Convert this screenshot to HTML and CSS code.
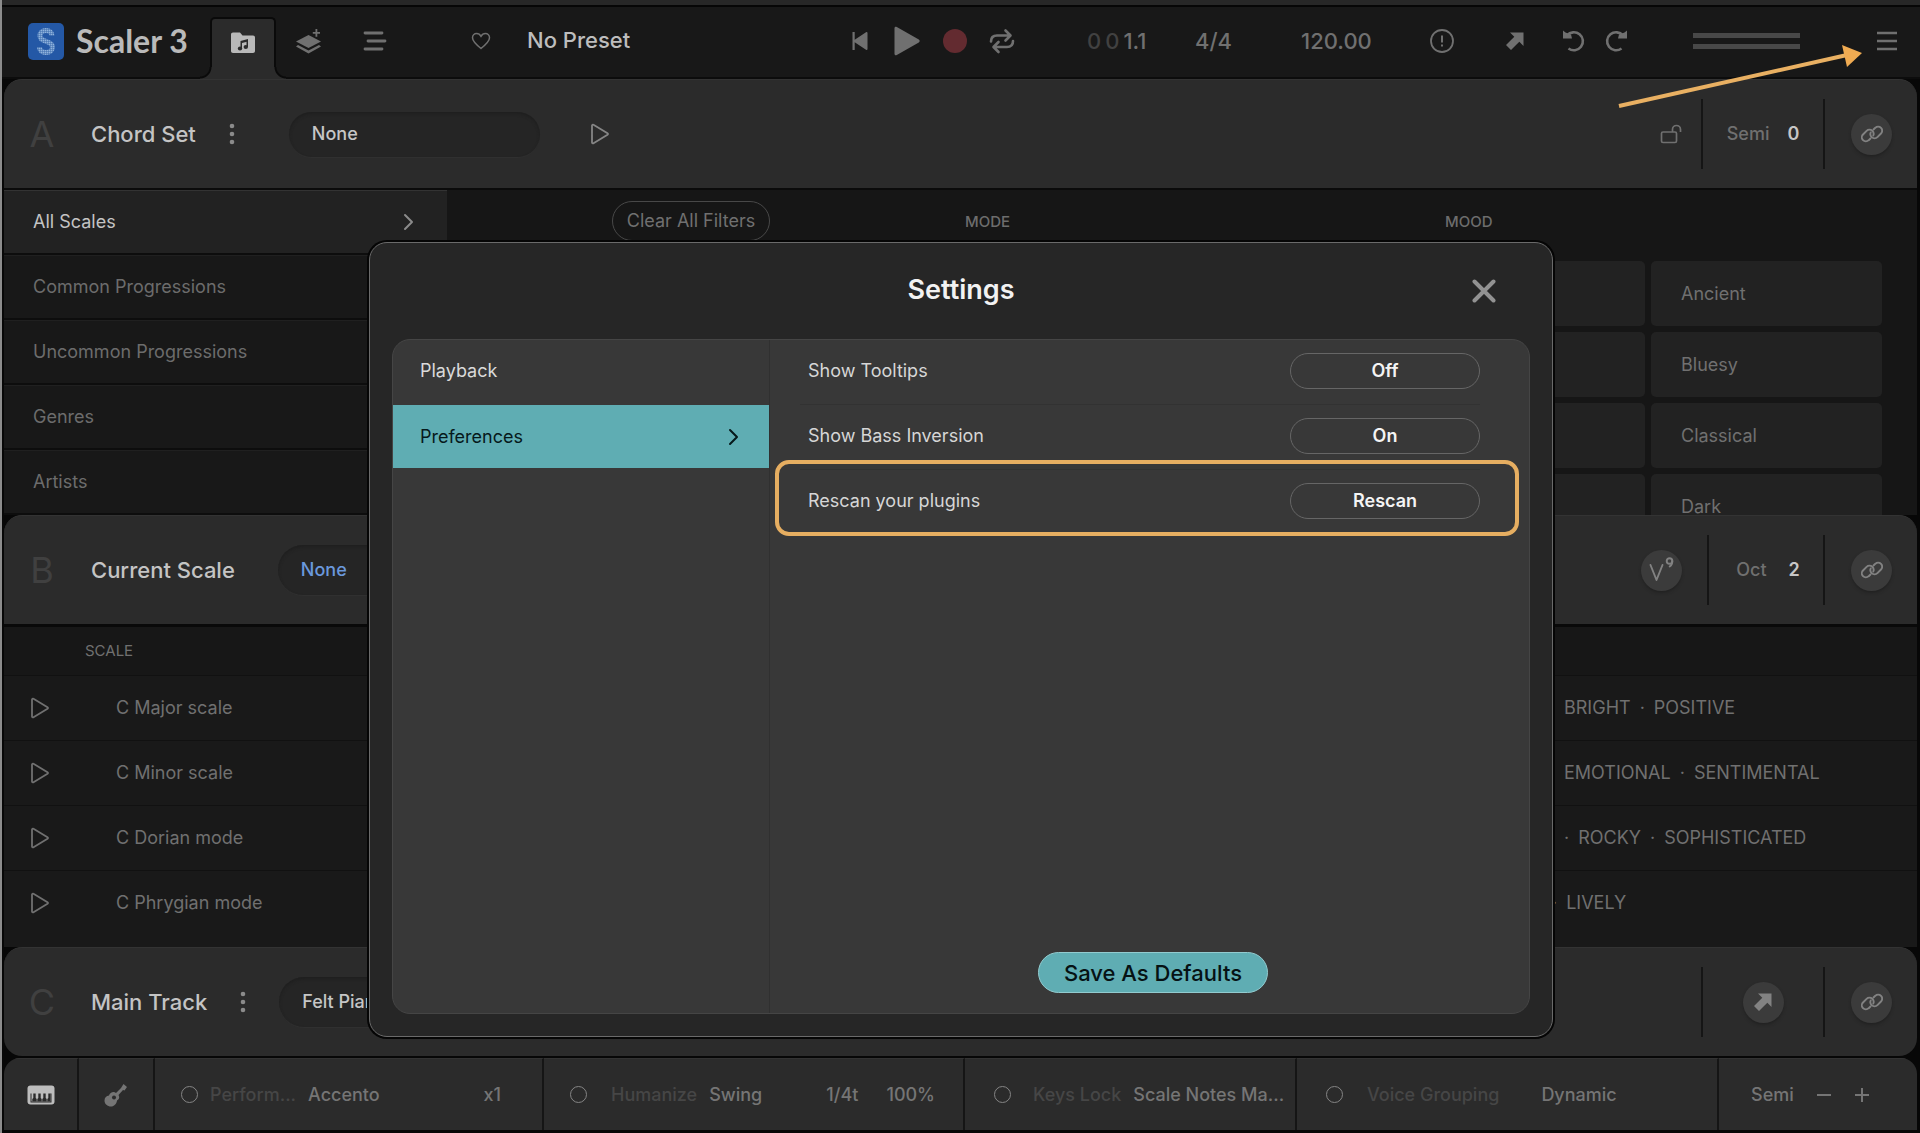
FILE: index.html
```html
<!DOCTYPE html>
<html lang="en">
<head>
<meta charset="utf-8">
<title>Scaler 3 – Settings</title>
<link rel="stylesheet" href="styles.css">
</head>
<body>
<svg class="sprite" aria-hidden="true">
  <symbol id="play" viewBox="0 0 20 22"><path d="M2 2.6v16.8c0 .9.8 1.3 1.5.8l14-8.4c.7-.5.7-1.1 0-1.6l-14-8.4C2.800 1.300 2 1.700 2 2.600z" fill="none" stroke="currentColor" stroke-width="1.8"/></symbol>
  <symbol id="link" viewBox="0 0 22 18"><g fill="none" stroke="currentColor" stroke-width="1.900" stroke-linecap="round"><path d="M9.500 13.500l-1.800 1.700a4 4 0 0 1-5.700-5.700l3.600-3.700a4 4 0 0 1 5.700 0 4.200 4.200 0 0 1 1 4.700"/><path d="M12.500 4.500l1.800-1.700a4 4 0 0 1 5.700 5.700l-3.600 3.700a4 4 0 0 1-5.700 0 4.200 4.200 0 0 1-1-4.700"/></g></symbol>
  <symbol id="arrow" viewBox="0 0 20 20"><path d="M5 1.500h13.500v13.500l-4.200-4.300L6 19 1 14l8.300-8.300z" fill="currentColor"/></symbol>
  <symbol id="chevron" viewBox="0 0 12 18"><path d="M2 2l7 7-7 7" fill="none" stroke="currentColor" stroke-width="2" stroke-linecap="round" stroke-linejoin="round"/></symbol>
  <symbol id="dots" viewBox="0 0 6 22"><g fill="currentColor"><circle cx="3" cy="3" r="2.300"/><circle cx="3" cy="11" r="2.300"/><circle cx="3" cy="19" r="2.300"/></g></symbol>
</svg>

<div class="app">
  <header class="topbar">
    <div class="brand">
      <svg class="logo" viewBox="0 0 36 37"><defs><pattern id="led" width="2" height="2" patternUnits="userSpaceOnUse"><rect width="2" height="2" fill="#8fb2dd"/><path d="M0 0h2M0 0v2" stroke="#3c6cae" stroke-width="1"/></pattern></defs><rect width="36" height="37" rx="5" fill="#2458a6"/><path d="M24 12.500c0-3-2.500-5-6-5s-6 2-6 5.300c0 3 2.500 4.500 6 5.500s6.500 2.500 6.500 6c0 3.200-2.600 5.200-6.500 5.200s-6.500-2-6.500-5.200" fill="none" stroke="url(#led)" stroke-width="5"/></svg>
      <span class="wordmark">Scaler 3</span>
    </div>
    <nav class="tabs">
      <button class="tab tab-active" aria-label="Browse"><svg width="26" height="22" viewBox="0 0 26 22"><path d="M1 2.500C1 1.300 1.800.5 3 .5h7l2.500 3H23c1.200 0 2 .8 2 2V19c0 1.200-.8 2-2 2H3c-1.200 0-2-.8-2-2z" fill="currentColor"/><g fill="#2b2b2b"><path d="M10.500 9l7.500-2v2.400l-6 1.600v5h-1.500z"/><path d="M16.500 8H18v7h-1.500z"/><ellipse cx="10" cy="16.500" rx="2.200" ry="2"/><ellipse cx="15.800" cy="15" rx="2.200" ry="2"/></g></svg></button>
      <button class="tab" aria-label="Layers"><svg width="26" height="26" viewBox="0 0 26 26"><g fill="currentColor"><path d="M12.500 7L25 13.500 12.500 20 0 13.500z"/><path d="M2 17l10.500 5.500L23 17l2 1.500L12.500 25.500 0 18.500z"/><path d="M19.500 1h1.800v3H24v1.800h-2.700v3h-1.800v-3h-2.700V4h2.700z"/></g></svg></button>
      <button class="tab" aria-label="Arrange"><svg width="26" height="22" viewBox="0 0 26 22"><path d="M3 3h17M6 11h17M3 19h17" stroke="currentColor" stroke-width="2.800" stroke-linecap="round"/></svg></button>
    </nav>
    <button class="heart" aria-label="Favourite"><svg width="20" height="18" viewBox="0 0 20 18"><path d="M10 16.500C5 12.500 1.500 9.500 1.500 5.800 1.500 3.400 3.300 1.500 5.600 1.500c1.800 0 3.400 1 4.400 2.800 1-1.800 2.600-2.800 4.400-2.800 2.300 0 4.100 1.900 4.100 4.300 0 3.700-3.500 6.700-8.500 10.700z" fill="none" stroke="currentColor" stroke-width="1.500"/></svg></button>
    <button class="preset">No Preset</button>
    <div class="transport">
      <button aria-label="Rewind"><svg width="18" height="20" viewBox="0 0 18 20"><path d="M1.500 1h2.200v7.800L15 1.200c.8-.5 1.500-.1 1.500.8v16c0 .9-.7 1.300-1.500.8L3.700 11.200V19H1.500z" fill="currentColor"/></svg></button>
      <button aria-label="Play"><svg width="28" height="30" viewBox="0 0 28 30"><path d="M1.500 2.200C1.500.8 2.600.3 3.800 1l22 12.600c1.200.8 1.200 2 0 2.800l-22 12.600c-1.200.7-2.300.2-2.300-1.200z" fill="currentColor"/></svg></button>
      <button aria-label="Record"><svg width="24" height="24" viewBox="0 0 24 24"><circle cx="12" cy="12" r="12" fill="#632b30"/></svg></button>
      <button aria-label="Loop"><svg width="26" height="26" viewBox="0 0 26 26"><g fill="none" stroke="currentColor" stroke-width="2.600" stroke-linecap="round" stroke-linejoin="round"><path d="M2 13.500c0-4 2.500-6 6-6h13M16.500 2.500l5 5-5 5"/><path d="M24 13c0 4-2.500 6-6 6H5M9.500 14l-5 5 5 5"/></g></svg></button>
    </div>
    <div class="readout position"><span>0</span><span>0</span>1.1</div>
    <div class="readout meter">4/4</div>
    <div class="readout tempo">120.00</div>
    <button class="alert" aria-label="Panic"><svg width="24" height="24" viewBox="0 0 24 24"><circle cx="12" cy="12" r="11" fill="none" stroke="currentColor" stroke-width="1.800"/><path d="M12 6.500v7M12 15.500v2" stroke="currentColor" stroke-width="2"/></svg></button>
    <button class="export" aria-label="Export"><svg width="20" height="20"><use href="#arrow"/></svg></button>
    <div class="history">
      <button aria-label="Undo"><svg width="24" height="24" viewBox="0 0 24 24"><path d="M5 6.500a9 9 0 1 1 1.500 13" fill="none" stroke="currentColor" stroke-width="2.600"/><path d="M1 1.500l2.500 2L9 5.500l1 4H1z" fill="currentColor"/></svg></button>
      <button aria-label="Redo"><svg width="24" height="24" viewBox="0 0 24 24"><path d="M19 6.500a9 9 0 1 0-1.500 13" fill="none" stroke="currentColor" stroke-width="2.600"/><path d="M23 1.500l-2.500 2L15 5.500l-1 4h9z" fill="currentColor"/></svg></button>
    </div>
    <div class="levels"><i></i><i></i></div>
    <button class="menu" aria-label="Menu"><svg width="22" height="20" viewBox="0 0 22 20"><path d="M1 2h20M1 10h20M1 18h20" stroke="currentColor" stroke-width="2.600"/></svg></button>
  </header>

  <section class="panel">
    <span class="letter">A</span>
    <h2>Chord Set</h2>
    <button class="more" aria-label="More"><svg width="6" height="22"><use href="#dots"/></svg></button>
    <button class="pill chord-pill">None</button>
    <button class="audition" aria-label="Audition"><svg width="20" height="22"><use href="#play"/></svg></button>
    <div class="panel-end">
      <button class="lock" aria-label="Lock"><svg width="22" height="20" viewBox="0 0 22 20"><g fill="none" stroke="currentColor" stroke-width="1.700"><rect x="1.500" y="8" width="15" height="10.500" rx="1.500"/><path d="M12.500 8V5.500a4 4 0 0 1 8 0v2.500"/></g></svg></button>
      <div class="stepper">Semi<b>0</b></div>
      <button class="round" aria-label="Link"><svg width="22" height="18"><use href="#link"/></svg></button>
    </div>
  </section>

  <section class="browser">
    <nav class="categories">
      <a class="category current" href="#">All Scales<svg width="12" height="18"><use href="#chevron"/></svg></a>
      <a class="category" href="#">Common Progressions</a>
      <a class="category" href="#">Uncommon Progressions</a>
      <a class="category" href="#">Genres</a>
      <a class="category" href="#">Artists</a>
    </nav>
    <div class="filters">
      <button class="clear">Clear All Filters</button>
      <h3 class="mode-title">MODE</h3>
      <div class="mood">
        <h3>MOOD</h3>
        <div class="tiles">
          <button></button><button>Ancient</button>
          <button></button><button>Bluesy</button>
          <button></button><button>Classical</button>
          <button></button><button>Dark</button>
        </div>
      </div>
    </div>
  </section>

  <section class="panel">
    <span class="letter">B</span>
    <h2>Current Scale</h2>
    <button class="pill scale-pill">None</button>
    <div class="panel-end">
      <button class="round voicing" aria-label="Voicing"><svg width="26" height="30" viewBox="0 0 26 30"><g fill="none" stroke="currentColor" stroke-width="1.900" stroke-linecap="round" stroke-linejoin="round"><path d="M1.500 10l6 15 6-15"/><circle cx="20.500" cy="6" r="2.800"/><path d="M23.300 6c0 3-1 4.500-2.600 5.500"/></g></svg></button>
      <div class="stepper stepper-oct">Oct<b>2</b></div>
      <button class="round" aria-label="Link"><svg width="22" height="18"><use href="#link"/></svg></button>
    </div>
  </section>

  <section class="scales">
    <table>
      <thead><tr><th class="audition-cell"></th><th class="scale-head">SCALE</th><th></th></tr></thead>
      <tbody>
        <tr><td class="audition-cell"><button aria-label="Play C Major scale"><svg width="20" height="22"><use href="#play"/></svg></button></td><td class="name">C Major scale</td><td class="tags"><span>BRIGHT</span><span>·</span><span>POSITIVE</span></td></tr>
        <tr><td class="audition-cell"><button aria-label="Play C Minor scale"><svg width="20" height="22"><use href="#play"/></svg></button></td><td class="name">C Minor scale</td><td class="tags"><span>EMOTIONAL</span><span>·</span><span>SENTIMENTAL</span></td></tr>
        <tr><td class="audition-cell"><button aria-label="Play C Dorian mode"><svg width="20" height="22"><use href="#play"/></svg></button></td><td class="name">C Dorian mode</td><td class="tags"><span>·</span><span>ROCKY</span><span>·</span><span>SOPHISTICATED</span></td></tr>
        <tr><td class="audition-cell"><button aria-label="Play C Phrygian mode"><svg width="20" height="22"><use href="#play"/></svg></button></td><td class="name">C Phrygian mode</td><td class="tags"><span class="hanging">·</span><span>LIVELY</span></td></tr>
      </tbody>
    </table>
  </section>

  <section class="panel panel-c">
    <span class="letter">C</span>
    <h2>Main Track</h2>
    <button class="more" aria-label="More"><svg width="6" height="22"><use href="#dots"/></svg></button>
    <button class="pill track-pill">Felt Piano</button>
    <div class="panel-end">
      <div class="stepper"><button class="round" aria-label="Export"><svg width="20" height="20"><use href="#arrow"/></svg></button></div>
      <button class="round" aria-label="Link"><svg width="22" height="18"><use href="#link"/></svg></button>
    </div>
  </section>

  <footer class="footer">
    <button class="cell cell-icon bright" aria-label="Keyboard"><svg width="28" height="20" viewBox="0 0 28 20"><rect x=".5" y=".5" width="27" height="19" rx="3" fill="currentColor"/><path d="M3.500 8.500h1v8h19v-8h1v9h-21z" fill="#2b2b2b"/><path d="M6.300 8.500h2.400v4.500l1 1v2.500H5.300V14l1-1zM11.300 8.500h2.400v4.500l1 1v2.500h-4.400V14l1-1zM16.300 8.500h2.400v4.500l1 1v2.500h-4.400V14l1-1zM21.300 8.500h2.200v8h-3.200V14l1-1z" fill="#2b2b2b"/></svg></button>
    <button class="cell cell-icon" aria-label="Guitar"><svg width="24" height="24" viewBox="0 0 24 24"><path d="M19.500 1l3.500 3-2.500 3.500-1.500-.5-4.500 5c1.500 2.500.5 4.500-1.500 5.500-.5 3.500-3 6-6 6C3.500 23.500.5 21 .5 17.500c0-3 2-4.500 4.500-5 1-3 4.500-4.500 7-2.500l5-5z" fill="currentColor"/><circle cx="10" cy="14.500" r="2" fill="#2b2b2b"/></svg></button>
    <div class="cell"><i class="led"></i><span class="dim">Perform...</span><span>Accento</span><span class="end">x1</span></div>
    <div class="cell humanize"><i class="led"></i><span class="dim">Humanize</span><span>Swing</span><span class="end">1/4t</span><span class="percent">100%</span></div>
    <div class="cell keys"><i class="led"></i><span class="dim">Keys Lock</span><span>Scale Notes Ma...</span></div>
    <div class="cell voice"><i class="led"></i><span class="dim">Voice Grouping</span><span>Dynamic</span></div>
    <div class="cell semi"><span>Semi</span><button aria-label="Decrease"><svg width="16" height="16" viewBox="0 0 16 16"><path d="M1 8h14" stroke="currentColor" stroke-width="2"/></svg></button><button aria-label="Increase"><svg width="16" height="16" viewBox="0 0 16 16"><path d="M1 8h14M8 1v14" stroke="currentColor" stroke-width="2"/></svg></button></div>
  </footer>
</div>

<div class="overlay">
  <div class="dialog" role="dialog" aria-labelledby="dialog-title">
    <div class="dialog-head">
      <h1 id="dialog-title">Settings</h1>
      <button class="close" aria-label="Close"><svg width="24" height="24" viewBox="0 0 24 24"><path d="M2.500 2.500l19 19M21.500 2.500l-19 19" stroke="currentColor" stroke-width="4" stroke-linecap="round"/></svg></button>
    </div>
    <div class="dialog-body">
      <nav class="sections">
        <a href="#">Playback</a>
        <a class="selected" href="#">Preferences<svg width="12" height="18"><use href="#chevron"/></svg></a>
      </nav>
      <div class="options">
        <div class="option"><label for="tooltips">Show Tooltips</label><button id="tooltips">Off</button></div>
        <div class="option"><label for="inversion">Show Bass Inversion</label><button id="inversion">On</button></div>
        <div class="option highlighted"><label for="rescan">Rescan your plugins</label><button id="rescan">Rescan</button></div>
        <button class="save">Save As Defaults</button>
      </div>
    </div>
  </div>
</div>
<svg class="pointer" width="250" height="70" viewBox="0 0 250 70"><path d="M4 62L232 11" stroke="#e9b062" stroke-width="4"/><path d="M227 1l20 8-15 14z" fill="#f0ab52"/></svg>
</body>
</html>
```
FILE: styles.css
```css
* { box-sizing: border-box; }
body { margin: 0; background: #070707; font: 400 18px/24px Inter, "Liberation Sans", sans-serif; color: #707070; }
button { margin: 0; padding: 0; border: 0; background: none; font: inherit; color: inherit; }
a { color: inherit; text-decoration: none; }
h1, h2, h3 { margin: 0; }
svg { display: block; flex: none; }
.sprite { position: absolute; width: 0; height: 0; }

.app { min-height: 100vh; display: flex; flex-direction: column; border-left: 2px solid #8c8c8c; padding: 0 3px 3px 2px; background: #070707; }

/* Top bar */
.topbar { display: flex; align-items: center; height: 79px; padding: 0 22px 0 26px; margin: 0 -3px 0 -2px; border-top: 5px solid #272727; border-bottom: 2px solid #0c0c0c; background: #181818; box-shadow: inset 0 2px #060606; }
.brand { display: flex; align-items: center; gap: 12px; width: 182px; }
.logo { width: 36px; height: 37px; }
.wordmark { font: 700 32px/36px Lato, sans-serif; color: #bababa; white-space: nowrap; }
.tabs { display: flex; align-self: stretch; }
.tab { width: 66px; display: flex; align-items: center; justify-content: center; }
.tab-active { position: relative; margin: 12px 0 -2px; height: 62px; padding-bottom: 12px; border: 2px solid #0a0a0a; border-bottom: 0; border-radius: 5px 5px 0 0; background: #2b2b2b; color: #b9b9b9; }
.tab-active::before, .tab-active::after { content: ""; position: absolute; bottom: 0; width: 12px; height: 12px; }
.tab-active::before { right: 100%; background: radial-gradient(circle at 0 0, transparent 9px, #0a0a0a 10px 11px, #2b2b2b 12px); }
.tab-active::after { left: 100%; background: radial-gradient(circle at 100% 0, transparent 9px, #0a0a0a 10px 11px, #2b2b2b 12px); }
.heart { margin: 0 36px 0 63px; }
.preset { font-size: 22px; font-weight: 500; padding-bottom: 2px; color: #bdbdbd; }
.transport { display: flex; align-items: center; gap: 22px; margin-left: auto; }
.transport button:first-child { margin-right: 2px; }
.readout { font-size: 22px; font-weight: 500; }
.readout span { color: #414141; }
.position { display: flex; gap: 4px; width: 66px; margin-left: 72px; }
.meter { width: 38px; margin-left: 42px; }
.tempo { width: 72px; margin-left: 68px; }
.alert { margin-left: 57px; }
.export { margin-left: 51px; }
.history { display: flex; gap: 18px; margin-left: 37px; }
.levels { display: grid; gap: 6px; width: 107px; margin: 0 76px 0 65px; }
.levels i { height: 5px; background: #484848; }

/* Lettered panels */
.panel { display: flex; align-items: center; height: 109px; padding: 0 25px 0 24px; border-top: 1px solid #333; border-radius: 18px 18px 0 0; background: #2b2b2b; }
.panel-c { border-radius: 18px; }
.letter { width: 28px; margin-right: 35px; font-size: 36px; font-weight: 400; line-height: 40px; text-align: center; color: #404040; }
.panel h2 { font-size: 22px; font-weight: 500; line-height: 28px; color: #c4c4c4; }
.more { margin-left: 33px; color: #8b8b8b; }
.pill { text-align: left; font-weight: 500; color: #c6c6c6; background: #252525; border-radius: 25px; height: 50px; padding-left: 23px; box-shadow: inset 0 2px 3px #1f1f1f, 0 1px #303030; }
.chord-pill { width: 251px; height: 45px; margin-left: 54px; }
.scale-pill { width: 300px; margin-left: 43px; color: #6a98dc; }
.track-pill { width: 300px; margin-left: 33px; }
.audition { margin-left: 50px; color: #858585; }
.panel-end { display: flex; align-items: center; margin-left: auto; }
.lock { margin-right: 19px; }
.stepper { display: flex; align-items: center; justify-content: center; gap: 18px; width: 124px; height: 70px; margin-right: 26px; border: solid #151515; border-width: 0 2px; font-weight: 500; }
.stepper b { font-weight: 600; color: #c6c6c6; }
.stepper-oct { width: 118px; gap: 22px; padding-left: 4px; }
.round { display: flex; align-items: center; justify-content: center; width: 41px; height: 41px; border-radius: 50%; background: #3b3b3b; box-shadow: 0 2px 3px #222; color: #828282; }
.voicing { margin-right: 25px; }

/* Scale browser */
.browser { display: flex; height: 327px; border-top: 2px solid #0b0b0b; background: #161616; overflow: hidden; }
.categories { display: flex; flex-direction: column; width: 443px; background: #181818; }
.category { flex: 1; display: flex; align-items: center; justify-content: space-between; padding: 0 32px 0 29px; border-bottom: 2px solid #0d0d0d; box-shadow: inset 0 1px #202020; color: #6c6c6c; }
.current { background: #222; color: #c4c4c4; box-shadow: inset 0 1px #333; }
.current svg { color: #8b8b8b; }
.filters { flex: 1; display: flex; align-items: flex-start; padding-right: 35px; }
.clear { margin: 11px 195px 0 165px; width: 158px; height: 40px; border: 1px solid #484848; border-radius: 20px; white-space: nowrap; }
.filters h3 { font-size: 15px; font-weight: 500; line-height: 24px; color: #6d6d6d; padding-top: 20px; }
.mood { width: 468px; margin-left: auto; }
.mood h3 { padding-left: 31px; }
.tiles { display: grid; grid-template-columns: 1fr 1fr; gap: 6px; margin-top: 27px; }
.tiles button { height: 65px; padding-left: 30px; border-radius: 5px; background: #222; text-align: left; }

/* Scale table */
.scales { flex: 1; border-top: 3px solid #090909; background: #191919; padding-bottom: 9px; }
table { width: 100%; border-collapse: collapse; }
th { height: 48px; padding: 0; text-align: left; font-size: 15px; font-weight: 400; background: #171717; }
td { height: 65px; padding: 0; }
tr { border-bottom: 1px solid #111; }
tbody tr:last-child { border-bottom: 0; }
.audition-cell { width: 81px; padding-left: 26px; }
.audition-cell button { display: block; }
.name { padding-left: 31px; }
.tags { width: 353px; white-space: nowrap; }
.tags span { margin-right: 9px; }
.tags .hanging { margin-left: -12px; }

/* Footer */
.footer { display: grid; grid-template-columns: 75px 76px 389fr 421fr 332fr 422fr 198px; height: 72px; margin-top: 2px; border-radius: 16px 16px 0 0; overflow: hidden; background: #2b2b2b; }
.cell { display: flex; align-items: center; padding: 0 41px 0 26px; border-top: 1px solid #333; border-right: 2px solid #151515; font-weight: 500; color: #757575; white-space: nowrap; }
.cell:last-child { border-right: 0; }
.cell-icon { justify-content: center; padding: 0; }
.bright { color: #bdbdbd; }
.led { flex: none; width: 17px; height: 17px; border: 1px solid #858585; border-radius: 50%; margin-right: 12px; }
.dim { color: #464646; margin-right: 12px; }
.end { margin-left: auto; }
.humanize { padding-right: 28px; }
.percent { margin-left: 28px; }
.humanize .led, .voice .led { margin-right: 24px; }
.keys .led { margin-right: 22px; }
.keys, .voice { padding-left: 29px; padding-right: 0; }
.voice .dim { margin-right: 42px; }
.semi { padding: 0 0 0 32px; gap: 22px; }

/* Settings dialog */
.overlay { position: absolute; inset: 242px 0 96px 2px; display: flex; justify-content: center; }
.dialog { display: flex; flex-direction: column; width: 1184px; max-width: 96%; padding: 0 22px 22px; border: 1px solid #6a6a6a; border-radius: 18px; background: #262626; box-shadow: 0 0 0 2px #050505; }
.dialog-head { position: relative; display: flex; align-items: center; justify-content: center; height: 96px; }
.dialog-head h1 { font-size: 27px; font-weight: 600; line-height: 36px; padding-bottom: 3px; color: #f2f2f2; }
.close { position: absolute; right: 34px; color: #929292; }
.dialog-body { flex: 1; display: flex; border: 1px solid #454545; border-radius: 18px; background: #383838; overflow: hidden; }
.sections { width: 377px; border-right: 1px solid #303030; color: #dadada; }
.sections a { display: flex; align-items: center; justify-content: space-between; height: 65px; padding: 0 29px 3px 27px; }
.sections .selected { height: 63px; padding-bottom: 0; background: #5fadb3; color: #06191b; }
.options { flex: 1; display: flex; flex-direction: column; align-items: center; padding: 0 10px 20px 17px; }
.option { align-self: stretch; position: relative; display: flex; align-items: center; justify-content: space-between; height: 65px; margin: 0 39px 0 13px; padding-left: 8px; padding-bottom: 3px; border-bottom: 1px solid #323232; color: #d6d6d6; }
.option button { width: 190px; height: 36px; border: 1px solid #666; border-radius: 18px; font-weight: 600; color: #f4f4f4; }
.option.highlighted { border-bottom: 0; }
.highlighted::after { content: ""; position: absolute; inset: -10px -39px -1px -25px; border: 4px solid #e6ae61; border-radius: 14px; pointer-events: none; }
.save { width: 230px; height: 41px; margin-top: auto; border: 1px solid #92cbcf; border-radius: 21px; background: #5fadb3; font-size: 22px; font-weight: 500; color: #061214; }

.pointer { position: absolute; top: 44px; right: 55px; }
```
